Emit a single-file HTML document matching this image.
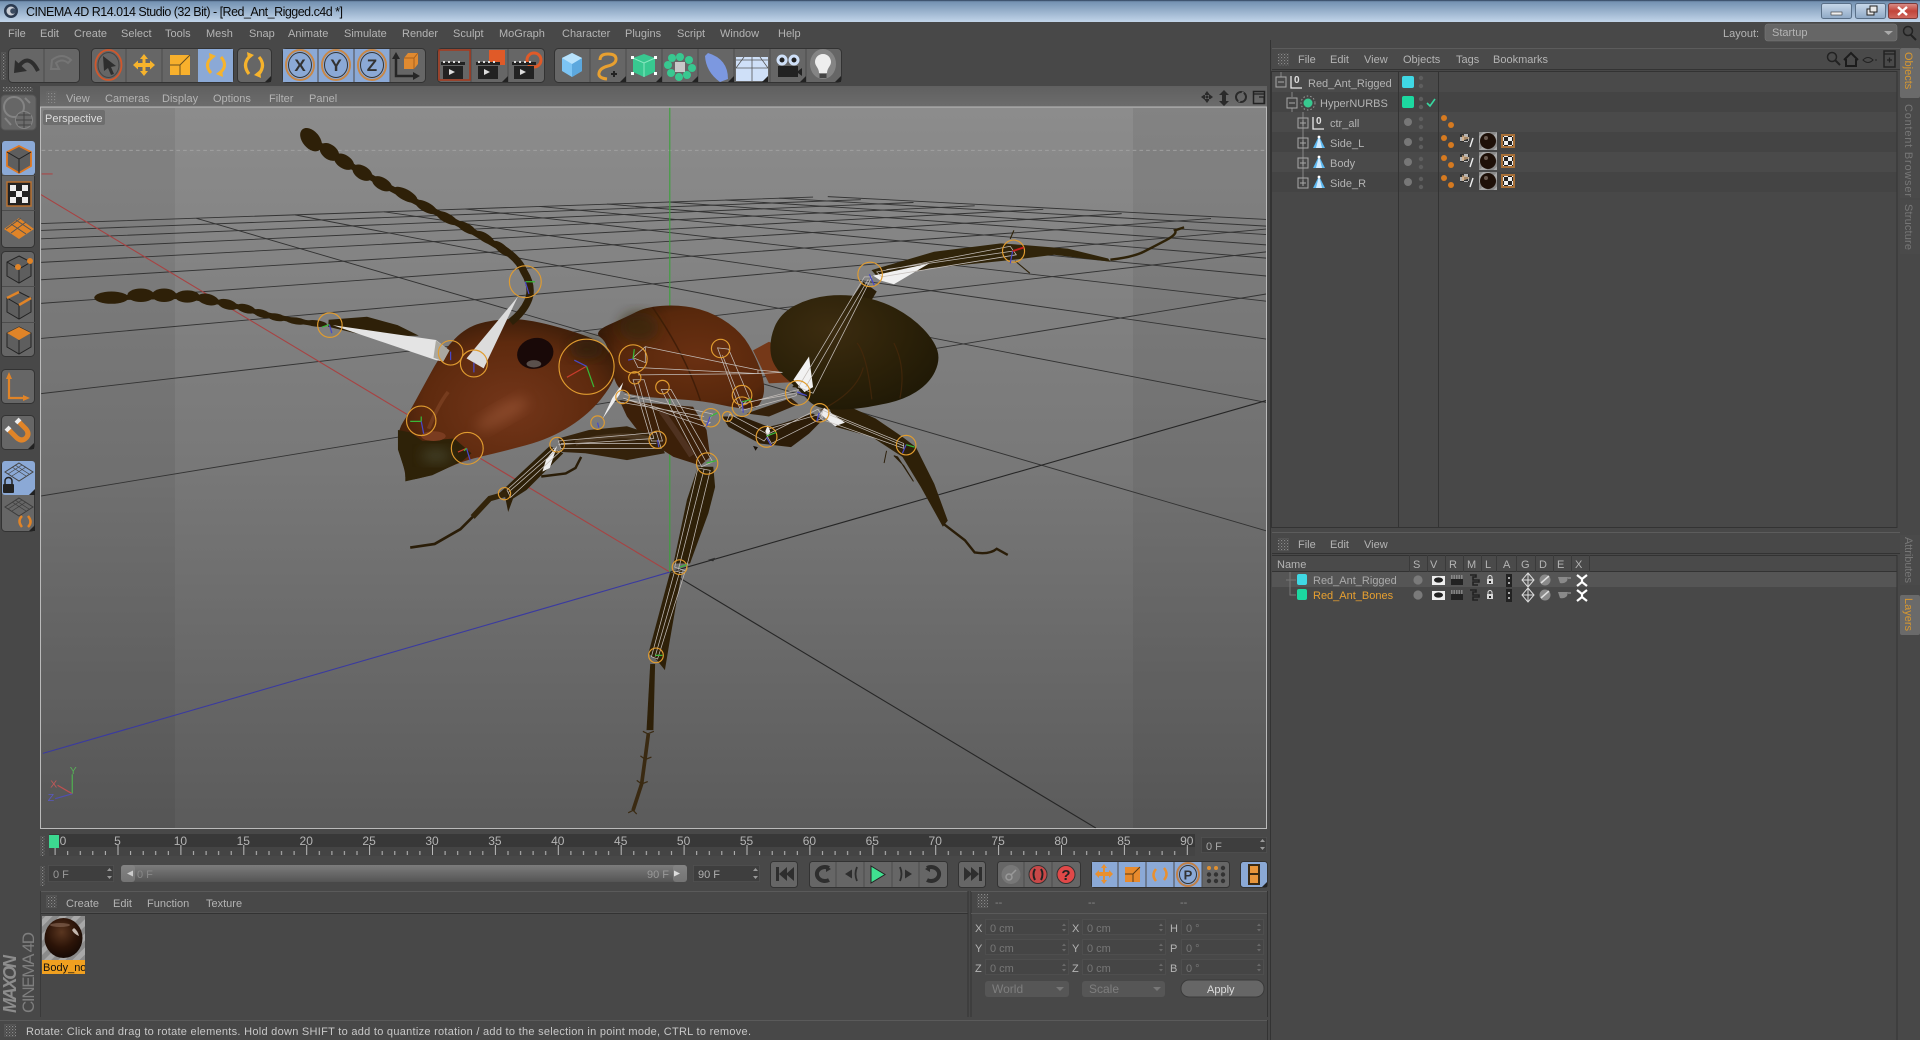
<!DOCTYPE html>
<html lang="en"><head><meta charset="utf-8"><title>CINEMA 4D R14.014 Studio</title>
<style>
html,body{margin:0;padding:0;background:#484848;overflow:hidden;width:1920px;height:1040px}
svg{display:block}
text{font-family:"Liberation Sans",sans-serif;font-size:11px;fill:#b4b4b4}
.dim{fill:#777}
.g{fill:#666;stroke:#333;stroke-width:1}
.b{fill:#8ba9d6}
.sep{stroke:#4c4c4c;stroke-width:1}
.fld{fill:#3e3e3e;stroke:#555;stroke-width:.6}
.fld2{fill:#454545;stroke:#505050;stroke-width:.8}
</style></head><body>
<svg width="1920" height="1040" viewBox="0 0 1920 1040" xmlns="http://www.w3.org/2000/svg">
<defs>
<linearGradient id="tb" x1="0" y1="0" x2="0" y2="1"><stop offset="0" stop-color="#2a3c55"/><stop offset=".08" stop-color="#7492b2"/><stop offset="1" stop-color="#c2d5ea"/></linearGradient>
<linearGradient id="vp" x1="0" y1="0" x2="0" y2="1"><stop offset="0" stop-color="#8c8c8c"/><stop offset=".5" stop-color="#787878"/><stop offset="1" stop-color="#5b5b5b"/></linearGradient>
<linearGradient id="vh" x1="0" y1="0" x2="0" y2="1"><stop offset="0" stop-color="#606060"/><stop offset="1" stop-color="#6c6c6c"/></linearGradient>
<linearGradient id="sl" x1="0" y1="0" x2="0" y2="1"><stop offset="0" stop-color="#7c7c7c"/><stop offset="1" stop-color="#545454"/></linearGradient>
<linearGradient id="close" x1="0" y1="0" x2="0" y2="1"><stop offset="0" stop-color="#d9908a"/><stop offset=".5" stop-color="#c2443a"/><stop offset="1" stop-color="#cf6a60"/></linearGradient>
<linearGradient id="wb" x1="0" y1="0" x2="0" y2="1"><stop offset="0" stop-color="#c8d8ea"/><stop offset="1" stop-color="#8fa9c6"/></linearGradient>
<radialGradient id="head" cx=".52" cy=".55" r=".62"><stop offset="0" stop-color="#74361a"/><stop offset=".65" stop-color="#5e2a0e"/><stop offset="1" stop-color="#321a08"/></radialGradient>
<radialGradient id="thx" cx=".6" cy=".5" r=".65"><stop offset="0" stop-color="#6a3012"/><stop offset=".7" stop-color="#58280c"/><stop offset="1" stop-color="#341a08"/></radialGradient>
<radialGradient id="abd" cx=".35" cy=".3" r=".8"><stop offset="0" stop-color="#3c2c10"/><stop offset=".6" stop-color="#2a2008"/><stop offset="1" stop-color="#1e1806"/></radialGradient>
<radialGradient id="sph" cx=".45" cy=".35" r=".7"><stop offset="0" stop-color="#5a3620"/><stop offset=".55" stop-color="#2c1408"/><stop offset="1" stop-color="#120804"/></radialGradient>
<filter id="bl" x="-30%" y="-30%" width="160%" height="160%"><feGaussianBlur stdDeviation="5"/></filter>
<pattern id="grip" width="3" height="3" patternUnits="userSpaceOnUse"><rect width="1.2" height="1.2" fill="#8a8a8a"/><rect x="1.5" y="1.5" width="1.2" height="1.2" fill="#6a6a6a"/></pattern>
<pattern id="ticks" x="54.6" y="0" width="62.9" height="1040" patternUnits="userSpaceOnUse">
<rect x="0" y="845" width="1" height="10" fill="#bbb"/><rect x="12.6" y="851" width="1" height="4" fill="#bbb"/><rect x="25.2" y="851" width="1" height="4" fill="#bbb"/><rect x="37.7" y="851" width="1" height="4" fill="#bbb"/><rect x="50.3" y="851" width="1" height="4" fill="#bbb"/></pattern>
<pattern id="stripe" width="10" height="10" patternUnits="userSpaceOnUse" patternTransform="rotate(45)"><rect width="10" height="10" fill="#8a8a8a"/><rect width="5" height="10" fill="#a8a8a8"/></pattern>
<pattern id="chk" width="8" height="8" patternUnits="userSpaceOnUse"><rect width="8" height="8" fill="#eee"/><rect width="4" height="4" fill="#222"/><rect x="4" y="4" width="4" height="4" fill="#222"/></pattern>
<clipPath id="vc"><rect x="33.6" y="87.6" width="1000.4" height="588.4"/></clipPath>
<clipPath id="mc"><rect x="42" y="960" width="43" height="14"/></clipPath>
<g id="plus"><rect x="-5" y="-5" width="10" height="10" fill="none" stroke="#a8a8a8"/><path d="M-3 0H3M0-3V3" stroke="#a8a8a8"/></g>
<g id="minus"><rect x="-5" y="-5" width="10" height="10" fill="none" stroke="#a8a8a8"/><path d="M-3 0H3" stroke="#a8a8a8"/></g>
<g id="nul"><path d="M-5-7V5H6" fill="none" stroke="#e8e8e8" stroke-width="1.3"/><text x="-2" y="0" style="font-size:10px;font-weight:bold;fill:#e0e0e0">0</text></g>
<g id="pol"><path d="M0-7L6 5H-6Z" fill="#5cb8f0"/><path d="M0-7L3 5H-3Z" fill="#cfeaff"/><circle cx="0" cy="-6" r="1.4" fill="#fff"/></g>
<g id="dots2"><circle cx="0" cy="-4" r="2.2" fill="#5e5e5e"/><circle cx="0" cy="4" r="2.2" fill="#5e5e5e"/></g>
<g id="otag"><circle cx="0" cy="-5" r="3" fill="#d67a20"/><circle cx="7" cy="2" r="3" fill="#d67a20"/></g>
<g id="tags"><path d="M0-7h9v8h-9z" fill="url(#chk)" opacity=".65"/><path d="M2-6l8 3-8 3z" fill="#ddb080" opacity=".7"/><path d="M13-3l-3 9" stroke="#eee" stroke-width="1.4"/>
<rect x="19" y="-9" width="18" height="18" fill="url(#stripe)"/><circle cx="28" cy="0" r="8" fill="#1e1008"/><circle cx="26" cy="-3" r="2" fill="#6a5a50"/><rect x="41" y="-7" width="14" height="14" fill="#a87038"/><rect x="43" y="-5" width="10" height="10" fill="url(#chk)"/></g>
<g id="ly"><circle cx="0" cy="0" r="4.6" fill="#7a7a7a"/>
<rect x="14" y="-4" width="13" height="9" fill="#eee"/><ellipse cx="20.5" cy="0" rx="4.5" ry="2.6" fill="#222"/>
<rect x="33" y="-1" width="12" height="6" fill="#222"/><path d="M33-4h12M33-2h12" stroke="#bbb" stroke-dasharray="1.500 1"/>
<path d="M52-5h6v2h-3v3h6v2h-6v3h5" fill="none" stroke="#222" stroke-width="1.600"/>
<rect x="69" y="-1" width="6" height="5" fill="#d8d8d8"/><path d="M70 0v-2.500a2 2 0 014 0V0" fill="none" stroke="#ddd"/><rect x="71" y="1" width="2" height="2" fill="#222"/>
<rect x="88" y="-6" width="6" height="13" fill="#222"/><rect x="90" y="-3" width="2" height="2" fill="#aaa"/><rect x="90" y="2" width="2" height="2" fill="#aaa"/>
<path d="M110-7l6 7-6 7-6-7z" fill="none" stroke="#ddd"/><path d="M110-7v14M104 0h12" stroke="#ddd"/>
<circle cx="127" cy="0" r="5.500" fill="#8a8a8a"/><path d="M123 3l8-7" stroke="#ddd" stroke-width="1.500"/>
<path d="M140-3h10l-1 4q-3 3-7 2z" fill="#8a8a8a"/><path d="M150-2h3" stroke="#aaa"/>
<path d="M159-5l5 4 5-4M159 6l5-4 5 4M164-1v3" fill="none" stroke="#fff" stroke-width="2.200"/></g>
</defs>

<rect width="1920" height="1040" fill="#484848"/>
<!-- title bar -->
<rect width="1920" height="22" fill="url(#tb)"/>
<circle cx="11" cy="11" r="7" fill="#2b3a50"/><circle cx="11" cy="11" r="4.500" fill="#c8ccd4"/><circle cx="13" cy="11" r="2.800" fill="#3a4a60"/>
<text x="26" y="16" textLength="317" style="font-size:12.5px;fill:#0a0a0a">CINEMA 4D R14.014 Studio (32 Bit) - [Red_Ant_Rigged.c4d *]</text>
<rect x="1821.500" y="3.500" width="30" height="15" rx="2" fill="url(#wb)" stroke="#5a7088"/><rect x="1831" y="12" width="11" height="3" fill="#f0f0f0" stroke="#333" stroke-width=".6"/>
<rect x="1855.500" y="3.500" width="30" height="15" rx="2" fill="url(#wb)" stroke="#5a7088"/><rect x="1867" y="9" width="7" height="6" fill="#e8e8e8" stroke="#222"/><rect x="1870" y="6" width="7" height="6" fill="#e8e8e8" stroke="#222"/>
<rect x="1888.500" y="3.500" width="29" height="15" rx="2" fill="url(#close)" stroke="#7a3a3a"/><path d="M1898 7l9 8M1907 7l-9 8" stroke="#fff" stroke-width="2.400"/>
<!-- menu -->
<text x="8" y="37">File</text><text x="40" y="37">Edit</text><text x="74" y="37">Create</text><text x="121" y="37">Select</text><text x="165" y="37">Tools</text><text x="206" y="37">Mesh</text><text x="249" y="37">Snap</text><text x="288" y="37">Animate</text><text x="344" y="37">Simulate</text><text x="402" y="37">Render</text><text x="453" y="37">Sculpt</text><text x="499" y="37">MoGraph</text><text x="562" y="37">Character</text><text x="625" y="37">Plugins</text><text x="677" y="37">Script</text><text x="720" y="37">Window</text><text x="778" y="37">Help</text>
<text x="1723" y="37">Layout:</text>
<rect x="1765" y="24" width="132" height="17" rx="3" fill="#666" stroke="#777" stroke-width=".6"/><text x="1772" y="36">Startup</text><path d="M1884 31h9l-4.500 4z" fill="#aaa"/>
<circle cx="1908" cy="31" r="4.500" fill="none" stroke="#222" stroke-width="1.500"/><path d="M1911 35l5 5" stroke="#222" stroke-width="2"/>

<!-- top toolbar -->
<rect x="1" y="52" width="5" height="28" fill="url(#grip)"/>
<rect x="8.500" y="48.500" width="71" height="34" rx="4" class="g"/><path d="M44 49v33" class="sep"/>
<path d="M19 66Q29 53 38 71" fill="none" stroke="#2e2e2e" stroke-width="4"/><path d="M14 73L15 60L27 71Z" fill="#2e2e2e"/>
<path d="M52 60q10-8 19 0l-3 3q-6-5-12 0l3 6-8 0z" fill="none" stroke="#757575" stroke-width="2"/>
<rect x="91.500" y="48.500" width="142" height="34" rx="4" class="g"/><rect x="198" y="49" width="35" height="33" class="b"/><path d="M126 49v33M162 49v33" class="sep"/>
<ellipse cx="108.500" cy="65" rx="13" ry="15" fill="none" stroke="#d0572c" stroke-width="1.800"/><ellipse cx="108.500" cy="65" rx="10.500" ry="12.500" fill="none" stroke="#444"/><path d="M103 56l13 10-5 1 3 7-3 1-3-7-4 3z" fill="#2e2e2e"/>
<path d="M144 54l4 5h-2.500v4h4.500v-2.500l5 4.500-5 4.500v-2.500h-4.500v4h2.500l-4 5-4-5h2.500v-4h-4.500v2.500l-5-4.500 5-4.500v2.500h4.500v-4h-2.500z" fill="#f6b32c"/>
<rect x="170" y="55" width="20" height="20" fill="#f8b02c"/><path d="M190 55l-10 10v10M180 65h-10" stroke="#6a5020" fill="none"/>
<g fill="none" stroke="#f6b32c" stroke-width="3"><path d="M211 73q-7-8 0-15"/><path d="M221 57q7 8 0 15"/></g><path d="M209 53l7 3-6 5zM223 77l-7-3 6-5z" fill="#f6b32c"/>
<rect x="237.500" y="48.500" width="34" height="34" rx="4" class="g"/><g fill="none" stroke="#f6b32c" stroke-width="3.200"><path d="M249 74q-7-9 0-17"/><path d="M259 57q7 8 0 17"/></g><path d="M247 52l7 3-6 5zM261 78l-7-3 6-5z" fill="#f6b32c"/><path d="M265 82l6-6v6z" fill="#222"/>
<rect x="282.500" y="48.500" width="143" height="34" rx="4" class="g"/><rect x="283" y="49" width="107" height="33" class="b"/><path d="M318 49v33M354 49v33M390 49v33" class="sep"/>
<g fill="none"><ellipse cx="300" cy="65" rx="14" ry="15" stroke="#c88848" stroke-width="2"/><ellipse cx="336" cy="65" rx="14" ry="15" stroke="#c88848" stroke-width="2"/><ellipse cx="372" cy="65" rx="14" ry="15" stroke="#c88848" stroke-width="2"/><ellipse cx="300" cy="65" rx="11.500" ry="12.500" stroke="#333"/><ellipse cx="336" cy="65" rx="11.500" ry="12.500" stroke="#333"/><ellipse cx="372" cy="65" rx="11.500" ry="12.500" stroke="#333"/></g>
<text x="300" y="71" text-anchor="middle" style="font-size:17px;font-weight:bold;fill:#333">X</text><text x="336" y="71" text-anchor="middle" style="font-size:17px;font-weight:bold;fill:#333">Y</text><text x="372" y="71" text-anchor="middle" style="font-size:17px;font-weight:bold;fill:#333">Z</text>
<path d="M396 56v20h20" fill="none" stroke="#262626" stroke-width="2.500"/><path d="M396 52l-4 7h8zM420 76l-7-4v8z" fill="#262626"/><path d="M404 58l4-5h10v11l-4 5h-10z" fill="#e08a30"/><path d="M404 58h10v11M414 58l4-5" stroke="#a8601c" fill="none"/>
<rect x="437.500" y="48.500" width="107" height="34" rx="4" class="g"/><path d="M471 49v33M508 49v33" class="sep"/>
<rect x="439" y="50" width="31" height="30" fill="none" stroke="#a8381c" stroke-width="1.500"/>
<g id="clap"><rect x="443" y="66" width="20" height="13" fill="#222"/><path d="M441 62h24v3h-24z" fill="#222"/><path d="M443 62h2M448 62h2M453 62h2M458 62h2" stroke="#ddd" stroke-width="2"/><path d="M449 69l6 3-6 3z" fill="#ddd"/></g>
<rect x="489" y="50" width="16" height="15" fill="#e05a28"/><use href="#clap" x="35"/><path d="M502 82l6-6v6z" fill="#222"/>
<circle cx="534" cy="60" r="7" fill="none" stroke="#e05a28" stroke-width="3"/><use href="#clap" x="71"/>
<rect x="554.500" y="48.500" width="287" height="34" rx="4" class="g"/><path d="M590 49v33M626 49v33M662 49v33M698 49v33M734 49v33M770 49v33M806 49v33" class="sep"/>
<path d="M572 53l10 5v13l-10 6-10-6V58z" fill="#7cc4f4"/><path d="M572 64l10-6v13l-10 6z" fill="#5ca8de"/><path d="M562 58l10-5 10 5-10 6z" fill="#b8e2fc"/>
<path d="M600 60q0-6 8-6t8 5t-8 7t-9 7t8 6" fill="none" stroke="#e8a030" stroke-width="3"/><path d="M611 74h6M614 71v6" stroke="#222" stroke-width="2"/><path d="M620 82l6-6v6z" fill="#222"/>
<path d="M633 58l11-4 11 4v14l-11 5-11-5z" fill="#38c890"/><path d="M644 63v14M633 58l11 5 11-5" stroke="#88e8c0" fill="none"/><rect x="631" y="56" width="3" height="3" fill="#fff"/><rect x="654" y="56" width="3" height="3" fill="#fff"/><rect x="631" y="72" width="3" height="3" fill="#fff"/><rect x="654" y="72" width="3" height="3" fill="#fff"/><path d="M656 82l6-6v6z" fill="#222"/>
<g fill="#38c890"><circle cx="680" cy="57" r="4"/><circle cx="689" cy="60" r="4"/><circle cx="692" cy="68" r="4"/><circle cx="687" cy="75" r="4"/><circle cx="679" cy="77" r="4"/><circle cx="671" cy="73" r="4"/><circle cx="668" cy="65" r="4"/><circle cx="672" cy="58" r="4"/></g><rect x="675" y="62" width="10" height="10" fill="#c8c8c8"/><path d="M692 82l6-6v6z" fill="#222"/>
<path d="M708 53q20 6 20 26l-8 3q-14-10-15-26z" fill="#7c98e0"/><path d="M728 82l6-6v6z" fill="#222"/>
<rect x="736" y="57" width="32" height="24" fill="#cfe0f8"/><path d="M736 60h32M736 68h32M752 57v24M744 57l-8 11M760 57l8 11" stroke="#555" stroke-width=".8"/><path d="M762 82l6-6v6z" fill="#222"/>
<circle cx="782" cy="60" r="5.500" fill="#cfe0f8"/><circle cx="794" cy="60" r="5.500" fill="#cfe0f8"/><circle cx="782" cy="60" r="2.500" fill="#222"/><circle cx="794" cy="60" r="2.500" fill="#222"/><rect x="778" y="66" width="20" height="11" fill="#222"/><path d="M798 71l4-3v8l-4-3z" fill="#222"/><path d="M800 82l6-6v6z" fill="#222"/>
<ellipse cx="823" cy="64" rx="13" ry="15" fill="#fff" opacity=".2"/><path d="M823 54c-5 0-8 4-8 8 0 4 4 6 4 11h8c0-5 4-7 4-11 0-4-3-8-8-8z" fill="#eee"/><rect x="819.500" y="74" width="7" height="4" fill="#444"/><path d="M835 82l6-6v6z" fill="#222"/>

<!-- left bar -->
<rect x="3" y="87" width="30" height="5" fill="url(#grip)"/>
<rect x="1" y="95" width="35" height="35" rx="4" fill="#666" stroke="#555"/><circle cx="14" cy="107" r="10" fill="none" stroke="#848484" stroke-width="2"/><circle cx="24" cy="120" r="8.500" fill="#6c6c6c" stroke="#848484"/><path d="M16 120h16M24 112v16M18 115h13M18 125h13" stroke="#444"/><path d="M5 118l6 7M25 98l5 5" stroke="#848484" stroke-width="2"/>
<rect x="1.500" y="141.500" width="33" height="106" rx="4" class="g"/><rect x="2" y="141" width="33" height="34" rx="3" class="b"/><path d="M2 175.500h33M2 210.500h33" class="sep"/>
<path d="M19 146l12 6v14l-12 7-12-7v-14z" fill="#5e5e5e" stroke="#e07820" stroke-width="1.800"/><path d="M19 159v14M7 152l12 7 12-7" stroke="#222" fill="none"/>
<rect x="7" y="182" width="24" height="24" fill="#222" stroke="#b87030" stroke-width="1.500"/><rect x="10" y="185" width="18" height="18" fill="#eee"/><path d="M16 185h6v6h-6zM10 191h6v6h-6zM22 191h6v6h-6zM16 197h6v6h-6z" fill="#222"/>
<path d="M19 218l15 11-15 10-15-10z" fill="#e08428"/><path d="M11 224l15 10M16 220l15 10M21 218l-15 11M26 222l-15 11" stroke="#555"/>
<rect x="1.500" y="251.500" width="33" height="105" rx="4" class="g"/><path d="M2 286.500h33M2 322.500h33" class="sep"/>
<g fill="#5e5e5e" stroke="#222"><path d="M19 256l12 6v14l-12 7-12-7v-14z"/><path d="M19 292l12 6v14l-12 7-12-7v-14z"/><path d="M19 327l12 6v14l-12 7-12-7v-14z"/></g><path d="M19 269v14M7 262l12 7 12-7M19 305v14M7 298l12 7 12-7M19 340v14" stroke="#222" fill="none"/>
<circle cx="18" cy="267" r="3" fill="#e08428"/><circle cx="30" cy="261" r="3" fill="#e08428"/><path d="M7 298l12-6M19 305l12-7" stroke="#e08428" stroke-width="2.500"/><path d="M19 327l12 6-12 7-12-7z" fill="#e08428"/>
<rect x="1.500" y="369.500" width="33" height="34" rx="4" class="g"/><path d="M9 378v20h17" fill="none" stroke="#e08428" stroke-width="2.200"/><path d="M9 372l-3 7h6zM30 398l-7-3v6z" fill="#e08428"/>
<rect x="1.500" y="415.500" width="33" height="34" rx="4" class="g"/><path d="M8 429l9 9q5 4 9 0t0-9l-8-8" fill="none" stroke="#e08428" stroke-width="5"/><path d="M6 431l4-4M16 423l4-4" stroke="#eee" stroke-width="4"/><path d="M28 449l6-6v6z" fill="#222"/>
<rect x="1.500" y="461.500" width="33" height="70" rx="4" class="g"/><rect x="2" y="461" width="33" height="34" rx="3" class="b"/>
<path d="M19 463l14 9-14 9-14-9z" fill="none" stroke="#444"/><path d="M12 467l14 9M15 465l14 9M26 467l-14 9M22 465l-14 9" stroke="#444" stroke-width=".7"/><rect x="3" y="484" width="11" height="9" rx="1" fill="#222"/><path d="M5 484v-3a3 3 0 017 0v3" fill="none" stroke="#222" stroke-width="1.500"/><path d="M29 495l6-6v6z" fill="#222"/>
<path d="M19 498l14 9-14 9-14-9z" fill="none" stroke="#3c3c3c"/><path d="M12 502l14 9M15 500l14 9M26 502l-14 9M22 500l-14 9" stroke="#3c3c3c" stroke-width=".7"/><g fill="none" stroke="#e08428" stroke-width="2.500"><path d="M22 527q-5-6 0-11"/><path d="M28 516q5 6 0 11"/></g><path d="M29 531l6-6v6z" fill="#222"/>
<text transform="translate(16,1013) rotate(-90)" textLength="58" style="font-size:18px;font-weight:bold;font-style:italic;fill:#8c8c8c">MAXON</text>
<text transform="translate(34,1013) rotate(-90)" textLength="81" style="font-size:17px;fill:#7e7e7e">CINEMA 4D</text>

<!-- viewport -->
<rect x="40" y="86" width="1227" height="21" fill="url(#vh)"/>
<rect x="46" y="91" width="11" height="12" fill="url(#grip)"/>
<g style="fill:#b0b0b0"><text x="66" y="102">View</text><text x="105" y="102">Cameras</text><text x="162" y="102">Display</text><text x="213" y="102">Options</text><text x="269" y="102">Filter</text><text x="309" y="102">Panel</text></g>
<path d="M1207 91l3 4h-6zM1207 103l3-4h-6zM1201 97l4 3v-6zM1213 97l-4 3v-6z" fill="#2a2a2a"/><circle cx="1207" cy="97" r="1.500" fill="#2a2a2a"/>
<path d="M1224 90l5 5h-3v6h3l-5 5-5-5h3v-6h-3z" fill="#2a2a2a"/>
<circle cx="1241" cy="97" r="5" fill="none" stroke="#2a2a2a" stroke-width="2"/><path d="M1243 92l-4 10" stroke="#666" stroke-width="2"/>
<rect x="1253.500" y="91.500" width="11" height="12" fill="none" stroke="#222" stroke-width="1.500"/><path d="M1254 94h10M1259 97h5v6" fill="none" stroke="#222" stroke-width="1.200"/>
<rect x="40.500" y="107" width="1226" height="721.500" fill="url(#vp)" stroke="#bababa" stroke-width="1"/>
<rect x="41" y="108" width="134" height="720" fill="#000" opacity=".06"/><rect x="1133" y="108" width="133" height="720" fill="#000" opacity=".06"/>

<g transform="scale(1.2245,1.225)" clip-path="url(#vc)">
<path d="M34 122.700H1034" stroke="#a4a4a4" stroke-width=".8" stroke-dasharray="3 2.500"/>
<!-- floor grid -->
<g stroke="#333" stroke-width=".75" fill="none">
<path d="M33 405L1034 240M33 321.400L1034 205.600M33 276.300L1034 187M33 247.700L989 178.400M33 228.400L916 174.400M33 214.200L852 170.900M33 203.500L796 168M33 195L746 165.300M33 188.100L703 163M33 182.500L664 160.900"/>
<path d="M160.400 178.200L1034 433.300M241 175.400L1034 328.500M313.800 172.900L1034 276.800M380 170.600L1034 245.900M440.500 168.500L1034 225.300M495.700 166.600L1034 210.700M545.800 164.900L1034 199.900M592.400 163.300L1034 191.500M636.300 161.800L1034 184.600M676 160.500L1034 179.100"/>
<path d="M547 467L1034 327M547 467L895 676" stroke="#262626" stroke-width=".9"/>
</g>
<path d="M34 142H43" stroke="#a84848" stroke-width=".9"/>
<path d="M33 158.600L547 467" stroke="#a84242" stroke-width=".9"/>
<path d="M35 615L547 467" stroke="#3a3aa0" stroke-width=".9"/>
<path d="M547 88V467" stroke="#3ca03c" stroke-width=".9"/>
<path d="M578 457l6-1.700-1.500 3z" fill="#2c2c2c"/>

<!-- far legs -->
<path d="M705 230L647 316L668 318L716 238Z" fill="#2a1e08"/>
<path d="M711.700 220.500L762.800 205.500L817.400 198.700L835.700 200L872 203L905 211L906.800 213.700L861 208L828 212L759 219L719 228.700Z" fill="#30240a"/>
<path d="M906.800 212Q925 210 934 205.500T952.400 196T959.600 188L967 185.600" fill="none" stroke="#2e2208" stroke-width="2"/>
<path d="M829 213l12 10M825 195l3-7" stroke="#2e2208" stroke-width=".9"/>
<!-- rear leg -->
<path d="M677 332L697 333.500L715 341.600L737 356.600L748 365L763 395L774 425L770 430L752 397.500L737 373L712 356.600L682.600 348.500Z" fill="#2e2008"/>
<path d="M771 428L788 441L796 451Q808 453 814 448L823 453" fill="none" stroke="#2a1d08" stroke-width="2"/>
<path d="M733 373L746 393L738 380L730 372ZM722 378L724 368" fill="#2a1d08" stroke="#2a1d08" stroke-width=".8"/>
<!-- petiole & abdomen -->
<path d="M615 286L628 279L642 286L646 312L628 313Z" fill="#753818"/>
<path d="M632.500 267Q637 256 649 249.500Q661 243 675.500 241.500Q690 240 704.500 242.500Q719 245 732 252Q745 259 754 268.500Q763 278 765.500 286Q768 294 763.500 303.500Q759 313 748 320Q737 327 720.500 330Q704 333.500 693.500 334Q683 335 673.500 333.500Q664 332 658.500 325Q653 318.500 642 309Q631 299.500 629.500 289Q628 278 632.500 267Z" fill="url(#abd)"/>
<path d="M705 300Q700 320 670 335M700 280Q708 290 712 326M730 280Q740 300 735 325" fill="none" stroke="#4a2a0c" stroke-width="1" opacity=".7"/>
<!-- leg from abdomen front -->
<path d="M589.600 340L595 348.500L620.600 362L646 365L660.700 354L671.600 343L664 337.500L638.800 345.700L627.900 348.500L606 340Z" fill="#2c1c08"/>
<path d="M609.600 337.500L628 340L652 330L646 325Z" fill="#34200a"/>
<path d="M615 364l4 1-2 3z" fill="#1a1208"/>
<!-- thorax -->
<path d="M497.500 265Q511 259 520 254.500Q529 250 544 249.500Q559 249 571.500 252.500Q584 256 595 264Q606 272 611.500 281.500Q617 291 620.500 300.500Q624 310 624 317Q624 324 620.500 329.500Q617 335 606 333.500Q595 332 584 329.500Q573 327 547.500 325.500Q522 324 512 321Q502 318 499.500 299Q497 280 490.500 275.500Q484 271 497.500 265Z" fill="url(#thx)"/>
<path d="M533 251Q560 290 572 327" fill="none" stroke="#3a1a06" stroke-width="1.200" opacity=".8"/>
<ellipse cx="522" cy="267" rx="16" ry="12" fill="#33260c" opacity=".65" filter="url(#bl)"/>
<!-- middle leg femur -->
<path d="M506 327L512 340L525 357L550 373L572 380L580 373L577 351L566 332Z" fill="#3c2009"/>
<path d="M540 335Q552 352 565 372" stroke="#5c4030" stroke-width="5" fill="none" opacity=".6"/>
<path d="M570 381L561 408L550 460L563.500 460L578.500 419L584 397.500L582.500 381Z" fill="#2e2008"/>
<path d="M547 468L557 465.500L547 523L543 547L536.500 539L529.500 533.500Z" fill="#2e2008"/>
<path d="M531 542L535 542L533.600 596L528 596Z" fill="#2e2008"/>
<path d="M529.500 599L527 618L524 640L517 661.500" fill="none" stroke="#3a2a12" stroke-width="3"/>
<path d="M517 661.500l-4 2M517 661.500l3 3M529 599l-4-2M529 599l5-2M527 620l-4-3M527 620l5-2M524 640l-4-3M524 640l5-2" stroke="#3a2a12" stroke-width="1"/>
<!-- front leg -->
<path d="M456 358L481 351L512 348L537 356L543 370L512 375.600L478 370L459 369Z" fill="#34220b"/>
<path d="M470 362Q500 352 530 358" stroke="#5a4630" stroke-width="4" fill="none" opacity=".6"/>
<path d="M474.600 373L470 382L462 386.500L442 389" fill="none" stroke="#2a1d08" stroke-width="2"/>
<path d="M449 364L460 370L430 400L419 407L415 418L412 403L402 408Z" fill="#2e2008"/>
<path d="M414 403L400 407L386 422" fill="none" stroke="#33240a" stroke-width="4.500"/>
<path d="M386 422L376 432L355 444L335 447" fill="none" stroke="#2a1d08" stroke-width="2.200"/>
<!-- head -->
<path d="M457.500 267.500Q431 260 417 260.500Q403 261 392 264Q381 267 371.500 276.500Q362 286 354.500 299.500Q347 313 340.500 325Q334 337 329.500 344Q325 351 325 359Q325 367 328 376Q331 385 331 389Q331 393 342 390.500Q353 388 365.500 382Q378 376 393.500 372.500Q409 369 429.500 363.500Q450 358 465.500 348Q481 338 491 325.500Q501 313 502 306Q503 299 500 292.500Q497 286 490.500 280.500Q484 275 457.500 267.500Z" fill="url(#head)"/>
<ellipse cx="410" cy="338" rx="24" ry="7" fill="#b06a48" opacity=".35" filter="url(#bl)" transform="rotate(-30 410 338)"/>
<path d="M350 350Q358 330 366 320" stroke="#8a4c2c" stroke-width="3" fill="none" opacity=".5"/>
<path d="M325 351L325 367L331 385L331 393L353 388L378 376L385 370L371 358L345 360L335 353Z" fill="#2e2208"/>
<ellipse cx="356" cy="372" rx="12" ry="6" fill="#4a4a30" opacity=".7" filter="url(#bl)"/>
<ellipse cx="354" cy="356" rx="10" ry="4" fill="#7a3c20"/>
<ellipse cx="437" cy="288.500" rx="15" ry="12.500" fill="#190908" transform="rotate(-15 437 288)"/><ellipse cx="436" cy="297" rx="6" ry="3" fill="#5a504c"/>
<ellipse cx="479" cy="285" rx="14" ry="8" fill="#2e200a" opacity=".7" filter="url(#bl)"/>
<!-- antennae -->
<path d="M253 113L281 132L312 150L348 169L381 186L410 203" fill="none" stroke="#2e2008" stroke-width="5" stroke-linejoin="round"/>
<path d="M91 243L153 242L186 248L214 256L242 262L262 265" fill="none" stroke="#2e2008" stroke-width="4" stroke-linejoin="round"/>
<g fill="#2e2008">
<ellipse cx="254" cy="114" rx="11" ry="7" transform="rotate(50 254 114)"/><ellipse cx="269" cy="124" rx="9" ry="6" transform="rotate(38 269 124)"/><ellipse cx="281" cy="132" rx="9" ry="5.500" transform="rotate(32 281 132)"/><ellipse cx="296" cy="141" rx="9" ry="5.500" transform="rotate(32 296 141)"/><ellipse cx="312" cy="150" rx="9" ry="5" transform="rotate(30 312 150)"/><ellipse cx="331" cy="159" rx="11" ry="4.500" transform="rotate(28 331 159)"/><ellipse cx="348" cy="169" rx="10" ry="4" transform="rotate(28 348 169)"/><ellipse cx="365" cy="178" rx="10" ry="3.800" transform="rotate(28 365 178)"/><ellipse cx="381" cy="186" rx="9" ry="3.600" transform="rotate(30 381 186)"/><ellipse cx="396" cy="194" rx="9" ry="3.500" transform="rotate(32 396 194)"/><ellipse cx="410" cy="203" rx="9" ry="3.500" transform="rotate(40 410 203)"/>
<ellipse cx="91" cy="243" rx="14" ry="5"/><ellipse cx="115" cy="241" rx="11" ry="5.500"/><ellipse cx="134" cy="241" rx="10" ry="5.500"/><ellipse cx="153" cy="242" rx="10" ry="5"/><ellipse cx="170" cy="244.500" rx="9" ry="4.500" transform="rotate(14 170 244)"/><ellipse cx="186" cy="248.500" rx="8.500" ry="4" transform="rotate(16 186 248)"/><ellipse cx="201" cy="252" rx="8" ry="3.500" transform="rotate(16 201 252)"/><ellipse cx="214" cy="256" rx="7.500" ry="3.200" transform="rotate(16 214 256)"/><ellipse cx="226" cy="259" rx="7.500" ry="3" transform="rotate(10 226 259)"/><ellipse cx="242" cy="262" rx="9" ry="2.800" transform="rotate(8 242 262)"/><ellipse cx="258" cy="264" rx="9" ry="2.600" transform="rotate(6 258 264)"/>
<path d="M268.400 261L299.700 258.600L324.700 265.400L342 274L303 275L268 266.700Z"/>
</g>
<path d="M412 204Q424 212 428 222Q436 235 431 246Q427 255 417 263" fill="none" stroke="#2e2008" stroke-width="6"/>
<!-- bones -->
<path d="M271.600 265.400L356 277.600L367 286L362 295L356 294Z" fill="#e4e4e4"/><path d="M356 278L367 286L362 295L354 292Z" fill="#aaa8a0"/>
<path d="M423 242L381 292.600L395 300.700Z" fill="#dcdcdc"/>
<path d="M648 310L660.700 291L664 316L657 320Z" fill="#f2f2f2"/>
<path d="M713 225L759 215L730 232L719 229Z" fill="#f0f0f0"/>
<path d="M670 338L673 333L690 345L682 348Z" fill="#eee"/>
<path d="M446 375L455 364L449 382L443 385Z" fill="#eee"/>
<path d="M500 325L509 312L506 322L492 342Z" fill="#eee"/>
<path d="M625 352l2-5 2 5-2 4z" fill="#eee"/>
<g fill="none" stroke="#c4beba" stroke-width=".6">
<path d="M517 292L527 283L619 302L639 304L619 305L521 300ZM527 283L527 296L517 292M521 306L619 305M619 302V305"/>
<path d="M586 284L595 285L612 325L604 333ZM590 290L606 330"/>
<path d="M517 310L526 310L541 360L532 360ZM521 311L534 358"/>
<path d="M540 318L548 318L582 377L573 381ZM545 320L576 376"/>
<path d="M509 325L580 345L575 348ZM510 322L582 338L578 345M505 328L575 340"/>
<path d="M456 360L536 353L540 366L458 366ZM456 363L534 358M458 362L536 362"/>
<path d="M414 400L452 366L457 369L417 406ZM415 402L454 368"/>
<path d="M652 316L706 226L712 226L664 321L652 316ZM658 316L709 228"/>
<path d="M716 222L825 201L830 208L720 226ZM724 220L827 205"/>
<path d="M606 330L652 318L650 323L606 335ZM612 328L650 321"/>
<path d="M596 338L628 355L624 360L594 343Z"/>
<path d="M626 355L668 334L672 341L630 362ZM628 350L670 338"/>
<path d="M672 335L738 362L738 366L670 342ZM676 338L738 364"/>
<path d="M570 382L580 384L560 466L551 463ZM575 383L554 465"/>
<path d="M551 466L559 468L537 538L532 536ZM555 467L535 536"/>
</g>
<!-- joint circles -->
<g fill="none" stroke="#e09c30" stroke-width=".95">
<circle cx="429" cy="230" r="13"/><circle cx="269.400" cy="265.400" r="10"/><circle cx="368" cy="288" r="10"/><circle cx="387" cy="296.700" r="11"/><circle cx="479" cy="299.400" r="22.500"/><circle cx="344" cy="343.500" r="12"/><circle cx="381.600" cy="366" r="13"/><circle cx="517" cy="293" r="11.500"/><circle cx="518.400" cy="308.400" r="5"/><circle cx="541" cy="316" r="5.500"/><circle cx="508.400" cy="324" r="5.500"/><circle cx="488" cy="345" r="5.500"/><circle cx="455" cy="363" r="6"/><circle cx="537" cy="359" r="7"/><circle cx="412" cy="403" r="5"/><circle cx="588.500" cy="284.500" r="7.500"/><circle cx="606" cy="322.600" r="8"/><circle cx="606" cy="332" r="8"/><circle cx="594" cy="340" r="4"/><circle cx="580.500" cy="341" r="7.500"/><circle cx="651.500" cy="320.700" r="10"/><circle cx="669.400" cy="337" r="7.500"/><circle cx="626" cy="356.600" r="8.500"/><circle cx="740" cy="363.400" r="8"/><circle cx="577.500" cy="378.400" r="8.700"/><circle cx="555" cy="463" r="6"/><circle cx="710.600" cy="224" r="10"/><circle cx="827.700" cy="205" r="9"/><circle cx="535.700" cy="535" r="6"/>
</g>
<!-- joint axes -->
<g fill="none" stroke-width="1">
<path d="M479 299l-16 9" stroke="#c83c2c"/><path d="M479 299l6 17" stroke="#38b838"/><path d="M479 299l-10-5" stroke="#4848c8"/>
<path d="M344 344h-9M344 344v-4" stroke="#38b838"/><path d="M344 344l2 10" stroke="#4848c8"/>
<path d="M381 366l-7 3" stroke="#c83c2c"/><path d="M381 366l3 10" stroke="#4848c8"/><path d="M381 366l-2 2" stroke="#38b838"/>
<path d="M429 230l8 0" stroke="#38b838"/><path d="M429 230l3 10" stroke="#4848c8"/>
<path d="M269 265l-6 2" stroke="#38b838"/><path d="M269 265l2 7" stroke="#4848c8"/>
<path d="M517 293l-4 1" stroke="#4848c8"/><path d="M517 293l1-8" stroke="#38b838"/><path d="M368 287v7M387 296v8M606 327l1 10M580 340l-3 8M651 320l8 3M710 224l4 9M827 205l-2 10M740 363l-3 7M669 337l-2 7M626 357l4 7M488 345l1 4M537 359l1 6" stroke="#4848c8"/>
<path d="M580 340l6-3M606 328l8-2M577 378l8-2M555 463l6-2M535 535l6 0M740 363l7 2M626 356l8-3" stroke="#38b838"/>
<path d="M827 205l9-3" stroke="#c81c1c" stroke-width="1.500"/>
</g>
<!-- axis gizmo -->
<path d="M59 648V632" stroke="#50b050"/><path d="M59 648L47 641" stroke="#c05050"/><path d="M59 648L45 652" stroke="#5050b0"/>
<text x="57" y="632" style="font-size:8.500px;fill:#58b058">Y</text><text x="41" y="643" style="font-size:8.500px;fill:#c05858">X</text><text x="39" y="654" style="font-size:8.500px;fill:#5858c0">Z</text>
</g>

<rect x="43" y="110" width="62" height="15" rx="2" fill="#6e6e6e"/><text x="45" y="122" style="fill:#dedede">Perspective</text>

<!-- timeline -->
<rect x="40" y="829" width="1228" height="62" fill="#484848"/>
<rect x="40" y="836" width="5" height="20" fill="url(#grip)"/><rect x="40" y="866" width="5" height="20" fill="url(#grip)"/>
<rect x="49" y="834" width="1146" height="13" fill="#383838"/><rect x="49" y="847" width="1146" height="9" fill="#444"/>
<rect x="49" y="834" width="1146" height="22" fill="url(#ticks)"/>
<rect x="49" y="835" width="10" height="13" fill="#3cd890"/>
<g text-anchor="middle" style="fill:#a8a8a8;font-size:12px"><text x="63" y="845" style="font-size:12px">0</text><text x="117.500" y="845" style="font-size:12px">5</text><text x="180.400" y="845" style="font-size:12px">10</text><text x="243.300" y="845" style="font-size:12px">15</text><text x="306.200" y="845" style="font-size:12px">20</text><text x="369.100" y="845" style="font-size:12px">25</text><text x="432" y="845" style="font-size:12px">30</text><text x="494.900" y="845" style="font-size:12px">35</text><text x="557.800" y="845" style="font-size:12px">40</text><text x="620.700" y="845" style="font-size:12px">45</text><text x="683.600" y="845" style="font-size:12px">50</text><text x="746.500" y="845" style="font-size:12px">55</text><text x="809.400" y="845" style="font-size:12px">60</text><text x="872.300" y="845" style="font-size:12px">65</text><text x="935.200" y="845" style="font-size:12px">70</text><text x="998.100" y="845" style="font-size:12px">75</text><text x="1061" y="845" style="font-size:12px">80</text><text x="1123.900" y="845" style="font-size:12px">85</text><text x="1186.800" y="845" style="font-size:12px">90</text></g>
<rect x="1201.500" y="837.500" width="65" height="15" class="fld"/><text x="1206" y="850" style="fill:#a8a8a8">0 F</text><path d="M1260 842l2.500-3 2.500 3zM1260 847l2.500 3 2.500-3z" fill="#999"/>
<rect x="48.500" y="865.500" width="65" height="16" class="fld"/><text x="53" y="878" style="fill:#999">0 F</text><path d="M107 871l2.500-3 2.500 3zM107 876l2.500 3 2.500-3z" fill="#999"/>
<rect x="121" y="865" width="566" height="17" rx="3" fill="url(#sl)"/><rect x="121" y="865" width="14" height="17" rx="3" fill="#888" opacity=".6"/><rect x="673" y="865" width="14" height="17" rx="3" fill="#888" opacity=".6"/>
<path d="M127 873.500l6-3v6z" fill="#ccc"/><text x="137" y="878" style="fill:#888">0 F</text><text x="647" y="878" style="fill:#999">90 F</text><path d="M680 873.500l-6-3v6z" fill="#ddd"/>
<rect x="693.500" y="865.500" width="66" height="16" class="fld"/><text x="698" y="878" style="fill:#b0b0b0">90 F</text><path d="M753 871l2.500-3 2.500 3zM753 876l2.500 3 2.500-3z" fill="#999"/>
<!-- transport -->
<rect x="770.500" y="861.500" width="27" height="26" rx="3" class="g"/><path d="M776 867h3v14h-3zM779 874l8-7v14zM786 874l8-7v14z" fill="#2e2e2e"/>
<rect x="809.500" y="861.500" width="138" height="26" rx="3" class="g"/><path d="M836 862v25M864 862v25M892 862v25M919 862v25" class="sep"/>
<path d="M829 868a8 7 0 100 12" fill="none" stroke="#2e2e2e" stroke-width="4"/><path d="M826 866v6l5-3z" fill="#2e2e2e"/>
<path d="M845 874l7-4.500v9z" fill="#2e2e2e"/><path d="M857 867q-3 7 0 14" fill="none" stroke="#2e2e2e" stroke-width="1.800"/>
<path d="M871 866l14 8.500-14 8.500z" fill="#40e090" stroke="#222"/>
<path d="M900 867q3 7 0 14" fill="none" stroke="#2e2e2e" stroke-width="1.800"/><path d="M905 869.500l7 4.500-7 4.500z" fill="#2e2e2e"/>
<path d="M927 868a8 7 0 110 12" fill="none" stroke="#2e2e2e" stroke-width="4"/><path d="M930 866v6l-5-3z" fill="#2e2e2e"/>
<rect x="958.500" y="861.500" width="27" height="26" rx="3" class="g"/><path d="M964 867l8 7-8 7zM971 867l8 7-8 7zM979 867h3v14h-3z" fill="#2e2e2e"/>
<rect x="997.500" y="861.500" width="83" height="26" rx="3" class="g"/><path d="M1024 862v25M1052 862v25" class="sep"/>
<circle cx="1011" cy="874.500" r="9.500" fill="#777"/><circle cx="1009" cy="877" r="3" fill="none" stroke="#999" stroke-width="1.500"/><path d="M1011 875l5-5" stroke="#999" stroke-width="1.500"/>
<circle cx="1038" cy="874.500" r="9" fill="#c84848" stroke="#333"/><path d="M1035 869q-3 5 0 11M1041 869q3 5 0 11" stroke="#222" stroke-width="2" fill="none"/>
<circle cx="1066" cy="874.500" r="9" fill="#e04848" stroke="#333"/><text x="1066" y="880" text-anchor="middle" style="font-size:15px;font-weight:bold;fill:#222">?</text>
<rect x="1091.500" y="861.500" width="138" height="26" rx="3" class="g"/><rect x="1092" y="862" width="110" height="25" class="b"/><path d="M1118 862v25M1146 862v25M1174 862v25M1202 862v25" class="sep"/>
<path d="M1104 864l3 4h-2v4h4v-2l4 4-4 4v-2h-4v4h2l-3 4-3-4h2v-4h-4v2l-4-4 4-4v2h4v-4h-2z" fill="#e89030"/>
<rect x="1125" y="867" width="15" height="15" fill="#e88a2c"/><path d="M1140 867l-7 7v8M1133 874h-8" stroke="#5a3a14" fill="none"/>
<g fill="none" stroke="#e89030" stroke-width="2.500"><path d="M1156 881q-5-6 0-12"/><path d="M1164 868q5 6 0 12"/></g>
<ellipse cx="1188" cy="874.500" rx="11" ry="11.500" fill="none" stroke="#c08048" stroke-width="2"/><ellipse cx="1188" cy="874.500" rx="8.500" ry="9" fill="none" stroke="#333"/><text x="1188" y="879.500" text-anchor="middle" style="font-size:13px;font-weight:bold;fill:#333">P</text>
<g fill="#e09030"><circle cx="1209" cy="868" r="2"/><circle cx="1216" cy="868" r="2"/></g><g fill="#333"><circle cx="1223" cy="868" r="2.200"/><circle cx="1209" cy="874.500" r="2.200"/><circle cx="1216" cy="874.500" r="2.200"/><circle cx="1223" cy="874.500" r="2.200"/><circle cx="1209" cy="881" r="2.200"/><circle cx="1216" cy="881" r="2.200"/><circle cx="1223" cy="881" r="2.200"/></g>
<rect x="1240.500" y="861.500" width="27" height="26" rx="3" fill="#8ba9d6" stroke="#333"/><rect x="1248" y="864" width="12" height="21" fill="#3a2a14"/><rect x="1250" y="866" width="8" height="7" fill="#e8963c"/><rect x="1250" y="875" width="8" height="8" fill="#e8963c"/><path d="M1262 887l5-5v5z" fill="#222"/>

<!-- material panel -->
<path d="M40 891.500H968M40 913H968" stroke="#5a5a5a"/><path d="M40 913.500H968" stroke="#333"/>
<path d="M968 891V1017M971 891V1017" stroke="#333"/><path d="M40.500 891V1017" stroke="#3a3a3a"/>
<rect x="46" y="895" width="11" height="13" fill="url(#grip)"/>
<text x="66" y="907">Create</text><text x="113" y="907">Edit</text><text x="147" y="907">Function</text><text x="206" y="907">Texture</text>
<rect x="42" y="916" width="43" height="44" fill="url(#stripe)"/><ellipse cx="63.500" cy="938" rx="19" ry="20" fill="url(#sph)"/><path d="M74 928q4 3 5 8-5-2-7-6z" fill="#e8e0d8" opacity=".8"/><ellipse cx="60" cy="925" rx="10" ry="2" fill="#8a6a58" opacity=".6"/>
<rect x="42" y="960" width="43" height="14" fill="#f0a020"/><g clip-path="url(#mc)"><text x="43" y="971" style="fill:#111">Body_node</text></g>
<!-- coord panel -->
<path d="M971 891.500H1268M971 913.500H1268" stroke="#5a5a5a"/><path d="M1267.500 891V1017" stroke="#333"/>
<rect x="977" y="894" width="11" height="14" fill="url(#grip)"/>
<g style="fill:#888"><text x="995" y="906" style="fill:#888">--</text><text x="1088" y="906" style="fill:#888">--</text><text x="1180" y="906" style="fill:#888">--</text></g>
<g><rect x="985.500" y="919.500" width="83" height="15" class="fld2"/><rect x="1082.500" y="919.500" width="83" height="15" class="fld2"/><rect x="1181.500" y="919.500" width="82" height="15" class="fld2"/>
<rect x="985.500" y="939.500" width="83" height="15" class="fld2"/><rect x="1082.500" y="939.500" width="83" height="15" class="fld2"/><rect x="1181.500" y="939.500" width="82" height="15" class="fld2"/>
<rect x="985.500" y="959.500" width="83" height="15" class="fld2"/><rect x="1082.500" y="959.500" width="83" height="15" class="fld2"/><rect x="1181.500" y="959.500" width="82" height="15" class="fld2"/></g>
<g><text x="975" y="932">X</text><text x="1072" y="932">X</text><text x="1170" y="932">H</text><text x="975" y="952">Y</text><text x="1072" y="952">Y</text><text x="1170" y="952">P</text><text x="975" y="972">Z</text><text x="1072" y="972">Z</text><text x="1170" y="972">B</text></g>
<g><text x="990" y="932" class="dim">0 cm</text><text x="1087" y="932" class="dim">0 cm</text><text x="1186" y="932" class="dim">0 °</text><text x="990" y="952" class="dim">0 cm</text><text x="1087" y="952" class="dim">0 cm</text><text x="1186" y="952" class="dim">0 °</text><text x="990" y="972" class="dim">0 cm</text><text x="1087" y="972" class="dim">0 cm</text><text x="1186" y="972" class="dim">0 °</text></g>
<path d="M1062 926l2-2.500 2 2.500zM1062 929l2 2.500 2-2.500zM1159 926l2-2.500 2 2.500zM1159 929l2 2.500 2-2.500zM1257 926l2-2.500 2 2.500zM1257 929l2 2.500 2-2.500zM1062 946l2-2.500 2 2.500zM1062 949l2 2.500 2-2.500zM1159 946l2-2.500 2 2.500zM1159 949l2 2.500 2-2.500zM1257 946l2-2.500 2 2.500zM1257 949l2 2.500 2-2.500zM1062 966l2-2.500 2 2.500zM1062 969l2 2.500 2-2.500zM1159 966l2-2.500 2 2.500zM1159 969l2 2.500 2-2.500zM1257 966l2-2.500 2 2.500zM1257 969l2 2.500 2-2.500z" fill="#6a6a6a"/>
<rect x="985" y="981" width="84" height="16" rx="3" fill="#565656"/><text x="992" y="993" style="font-size:12px;fill:#7e7e7e">World</text><path d="M1056 987h8l-4 4z" fill="#777"/>
<rect x="1082" y="981" width="83" height="16" rx="3" fill="#565656"/><text x="1089" y="993" style="font-size:12px;fill:#7e7e7e">Scale</text><path d="M1153 987h8l-4 4z" fill="#777"/>
<rect x="1181" y="980" width="83" height="17" rx="8" fill="#666" stroke="#3a3a3a"/><text x="1207" y="993" style="fill:#dcdcdc">Apply</text>
<!-- status -->
<path d="M0 1020.500H1268" stroke="#5a5a5a"/><path d="M1267.500 1020V1040" stroke="#333"/>
<rect x="4" y="1024" width="12" height="13" fill="url(#grip)"/>
<text x="26" y="1035" textLength="725" style="fill:#c8c8c8">Rotate: Click and drag to rotate elements. Hold down SHIFT to add to quantize rotation / add to the selection in point mode, CTRL to remove.</text>

<!-- right: objects panel -->
<path d="M1270.500 40V1040" stroke="#333"/>
<rect x="1272" y="48" width="628" height="22" fill="#4a4a4a"/><path d="M1272 48.500H1900" stroke="#5c5c5c"/><path d="M1272 69.500H1900" stroke="#333"/>
<rect x="1278" y="53" width="11" height="13" fill="url(#grip)"/>
<text x="1298" y="63">File</text><text x="1330" y="63">Edit</text><text x="1364" y="63">View</text><text x="1403" y="63">Objects</text><text x="1456" y="63">Tags</text><text x="1493" y="63">Bookmarks</text>
<circle cx="1832" cy="57" r="4.500" fill="none" stroke="#222" stroke-width="1.500"/><path d="M1835 60l5 5" stroke="#222" stroke-width="2"/>
<path d="M1844 60l7-7 7 7M1846 59v7h10v-7" fill="none" stroke="#1c1c1c" stroke-width="2"/>
<path d="M1863 60q5-5 10 0q-5 5-10 0z" fill="none" stroke="#222"/><path d="M1875 60h2" stroke="#222"/>
<rect x="1884" y="51" width="11" height="16" fill="none" stroke="#222" stroke-width="1.500"/><path d="M1884 54h11M1887 60h5M1889.500 57.500v5" stroke="#222" stroke-width="1.300"/>
<rect x="1272" y="72" width="625" height="455" fill="#484848"/><rect x="1272" y="72" width="625" height="20" fill="#4a4a4a"/><rect x="1272" y="92" width="625" height="20" fill="#444"/><rect x="1272" y="112" width="625" height="20" fill="#4a4a4a"/><rect x="1272" y="132" width="625" height="20" fill="#444"/><rect x="1272" y="152" width="625" height="20" fill="#4a4a4a"/><rect x="1272" y="172" width="625" height="20" fill="#444"/>
<path d="M1398.500 72V527M1438.500 72V527" stroke="#333"/><rect x="1271.500" y="71.500" width="625.500" height="456" fill="none" stroke="#333"/>
<path d="M1281 72v5M1292 92v5M1303 112v70M1292 108v4" stroke="#888" fill="none"/>
<use href="#minus" x="1281" y="82"/><use href="#nul" x="1296" y="83"/><text x="1308" y="87">Red_Ant_Rigged</text>
<use href="#minus" x="1292" y="103"/><circle cx="1308" cy="103" r="4.500" fill="#38c890"/><circle cx="1308" cy="103" r="7" fill="none" stroke="#999" stroke-dasharray="1.500 2"/><text x="1320" y="107">HyperNURBS</text>
<use href="#plus" x="1303" y="123"/><use href="#nul" x="1318" y="124"/><text x="1330" y="127">ctr_all</text>
<use href="#plus" x="1303" y="143"/><use href="#pol" x="1319" y="143"/><text x="1330" y="147">Side_L</text>
<use href="#plus" x="1303" y="163"/><use href="#pol" x="1319" y="163"/><text x="1330" y="167">Body</text>
<use href="#plus" x="1303" y="183"/><use href="#pol" x="1319" y="183"/><text x="1330" y="187">Side_R</text>
<rect x="1402" y="76" width="12" height="12" rx="2" fill="#3fd8e4"/><rect x="1402" y="96" width="12" height="12" rx="2" fill="#1cd8a0"/>
<circle cx="1408" cy="122" r="4" fill="#777"/><circle cx="1408" cy="142" r="4" fill="#777"/><circle cx="1408" cy="162" r="4" fill="#777"/><circle cx="1408" cy="182" r="4" fill="#777"/>
<use href="#dots2" x="1421" y="82"/><use href="#dots2" x="1421" y="103"/><use href="#dots2" x="1421" y="123"/><use href="#dots2" x="1421" y="143"/><use href="#dots2" x="1421" y="163"/><use href="#dots2" x="1421" y="183"/>
<path d="M1427 103l3 3 5-7" fill="none" stroke="#38d8a0" stroke-width="1.600"/>
<use href="#otag" x="1444" y="123"/><use href="#otag" x="1444" y="143"/><use href="#otag" x="1444" y="163"/><use href="#otag" x="1444" y="183"/>
<use href="#tags" x="1460" y="141"/><use href="#tags" x="1460" y="161"/><use href="#tags" x="1460" y="181"/>

<!-- layers -->
<path d="M1272 532.500H1900" stroke="#5c5c5c"/><path d="M1272 553.500H1900" stroke="#333"/>
<rect x="1278" y="538" width="11" height="13" fill="url(#grip)"/>
<text x="1298" y="548">File</text><text x="1330" y="548">Edit</text><text x="1364" y="548">View</text>
<rect x="1272" y="556" width="625" height="16" fill="#4a4a4a"/><rect x="1272" y="572" width="625" height="15" fill="#555"/><path d="M1272 555.500H1897V1040M1272 571.500H1897" stroke="#333" fill="none"/>
<path d="M1409.500 555v17M1427.500 555v17M1445.500 555v17M1463.500 555v17M1481.500 555v17M1496.500 555v17M1516.500 555v17M1535.500 555v17M1553.500 555v17M1571.500 555v17M1589.500 555v17" stroke="#3a3a3a"/>
<text x="1277" y="568">Name</text><text x="1413" y="568">S</text><text x="1430" y="568">V</text><text x="1449" y="568">R</text><text x="1467" y="568">M</text><text x="1485" y="568">L</text><text x="1503" y="568">A</text><text x="1521" y="568">G</text><text x="1539" y="568">D</text><text x="1557" y="568">E</text><text x="1575" y="568">X</text>
<path d="M1290 572v23h6M1286 580h10" stroke="#777" fill="none"/>
<rect x="1297" y="574" width="10" height="11" rx="2" fill="#3fd8e4"/><rect x="1297" y="589" width="10" height="11" rx="2" fill="#1cd8a0"/>
<text x="1313" y="584" style="fill:#aaa">Red_Ant_Rigged</text><text x="1313" y="599" style="fill:#e8a030">Red_Ant_Bones</text>
<use href="#ly" x="1418" y="580"/><use href="#ly" x="1418" y="595"/>

<!-- right tabs -->
<rect x="1900" y="48" width="20" height="50" rx="2" fill="#6a6a6a"/><rect x="1900" y="100" width="20" height="98" fill="#4a4a4a"/><rect x="1900" y="200" width="20" height="54" fill="#4a4a4a"/>
<rect x="1900" y="535" width="20" height="50" fill="#4a4a4a"/><rect x="1900" y="595" width="20" height="40" rx="2" fill="#6a6a6a"/>
<text transform="translate(1905,52) rotate(90)" style="fill:#d89830">Objects</text>
<text transform="translate(1905,104) rotate(90)" textLength="93" style="fill:#777">Content Browser</text>
<text transform="translate(1905,204) rotate(90)" textLength="46" style="fill:#777">Structure</text>
<text transform="translate(1905,537) rotate(90)" textLength="46" style="fill:#777">Attributes</text>
<text transform="translate(1905,598) rotate(90)" style="fill:#d89830">Layers</text>
</svg>
</body></html>
